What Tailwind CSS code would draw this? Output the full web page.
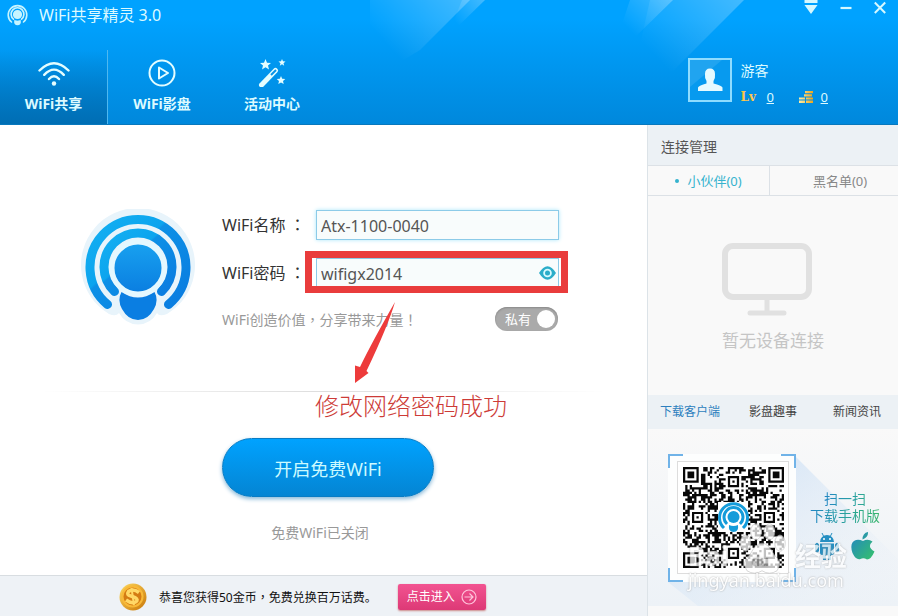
<!DOCTYPE html>
<html lang="zh-CN">
<head>
<meta charset="utf-8">
<meta name="viewport" content="width=device-width, initial-scale=1">
<title>WiFi共享精灵 3.0</title>
<script src="https://cdn.jsdelivr.net/npm/@tailwindcss/browser@4"></script>
</head>
<body class="flex min-h-screen flex-col bg-white font-['Noto_Sans','Noto_Sans_CJK_SC',sans-serif] text-sm text-[#333]">

<svg class="absolute h-0 w-0" aria-hidden="true">
  <defs>
    <linearGradient id="brand" x1="0" y1="0" x2="1" y2="1">
      <stop offset="0" stop-color="#14b0f2"/><stop offset=".4" stop-color="#0ca4ee"/><stop offset=".42" stop-color="#0d90e6"/><stop offset="1" stop-color="#0a7ce0"/>
    </linearGradient>
    <linearGradient id="head" x1="0" y1="0" x2="0" y2="1"><stop offset="0" stop-color="#18a2f0"/><stop offset="1" stop-color="#0a7de0"/></linearGradient>
    <linearGradient id="shine" x1="1" y1="0" x2="0.2" y2=".6"><stop offset="0" stop-color="#fff" stop-opacity=".26"/><stop offset="1" stop-color="#fff" stop-opacity="0"/></linearGradient>
    <linearGradient id="leaf" x1="0" y1="0" x2="1" y2="1"><stop offset="0" stop-color="#2284c6"/><stop offset="1" stop-color="#35c26a"/></linearGradient>
    <linearGradient id="gold" x1="0" y1="0" x2="1" y2="1"><stop offset="0" stop-color="#ffd95e"/><stop offset="1" stop-color="#c87608"/></linearGradient>
    <linearGradient id="coins" x1="0" y1="0" x2="1" y2="0"><stop offset="0" stop-color="#fff0a8"/><stop offset="1" stop-color="#eda51c"/></linearGradient>
  </defs>
</svg>

<header class="relative flex h-[125px] flex-col justify-between overflow-hidden border-b border-[#0878bd] bg-linear-to-b from-[#00a2ff] from-15% to-[#0088dc] text-[#dcfaff]">
  <svg class="pointer-events-none absolute top-0 left-0 h-[124px] w-[898px]" viewBox="0 0 898 124" aria-hidden="true">
    <path d="M370 0H470L420 50L370 80Z" fill="url(#shine)"/><path d="M462 0H485L448 36Z" fill="url(#shine)"/>
    <path d="M630 0H673L632 40L615 45Z" fill="url(#shine)"/><path d="M650 0H744L674 70L630 90Z" fill="url(#shine)"/>
  </svg>
  <div class="relative flex h-[30px] items-center justify-between pr-3 pl-[7px]">
    <div class="flex items-center gap-[11px]">
      <svg class="h-[22px] w-[21px]" viewBox="0 0 21 22" fill="none" stroke="#c6f4ff" stroke-width="1.6" stroke-linecap="round" aria-hidden="true">
        <path d="M4.500 18A9.300 9.300 0 1 1 16.500 18M6.500 15.200A6.400 6.400 0 1 1 14.500 15.200" /><circle cx="10.500" cy="10.500" r="3.800" fill="#c6f4ff"/><path d="M8 17Q10.500 18 13 17Q13.500 20.500 10.500 20.500Q7.500 20.500 8 17Z" fill="#c6f4ff"/>
      </svg>
      <h1 class="text-base leading-6">WiFi共享精灵 3.0</h1>
    </div>
    <div class="flex items-center gap-[22px] pb-4">
      <button type="button" aria-label="菜单"><svg class="h-[15px] w-[14px]" viewBox="0 0 14 15" fill="#d5f8ff"><path d="M.500 0H13.500V3H.500ZM.500 5H13.500L7 14Z"/></svg></button>
      <button type="button" aria-label="最小化"><svg class="h-[15px] w-3" viewBox="0 0 12 15"><path d="M.500 8H11.500" stroke="#d5f8ff" stroke-width="2.200"/></svg></button>
      <button type="button" aria-label="关闭"><svg class="h-[15px] w-3" viewBox="0 0 12 15"><path d="M.800 2.500L11.200 13M11.200 2.500L.800 13" stroke="#d5f8ff" stroke-width="2"/></svg></button>
    </div>
  </div>
  <div class="relative flex items-end justify-between">
    <nav class="flex text-sm leading-5 font-bold">
      <a href="#" class="flex h-[74px] w-[108px] flex-col items-center gap-[7px] border-r border-[#4eb8f0] bg-linear-to-b from-transparent to-[#006eb4] pt-[9px]">
        <svg class="h-7 w-8" viewBox="0 0 32 28" fill="none" stroke="#e4fdff" stroke-width="2.400" stroke-linecap="round" aria-hidden="true"><path d="M1.500 11.500Q16-3 30.500 11.500M6.200 15.800Q16 5.500 25.800 15.800M11 20Q16 14.500 21 20"/><circle cx="16" cy="24.500" r="2.200" fill="#e4fdff" stroke="none"/></svg>
        <span>WiFi共享</span>
      </a>
      <a href="#" class="flex h-[74px] w-[108px] flex-col items-center gap-[7px] pt-[9px]">
        <svg class="h-7 w-7" viewBox="0 0 28 28" fill="none" stroke="#e4fdff" stroke-width="2" aria-hidden="true"><circle cx="14" cy="14" r="12.500"/><path d="M11 8.500L20 14L11 19.500Z" stroke-linejoin="round"/></svg>
        <span>WiFi影盘</span>
      </a>
      <a href="#" class="flex h-[74px] w-[112px] flex-col items-center gap-[7px] pt-[9px]">
        <svg class="h-7 w-7" viewBox="0 0 28 28" fill="#e4fdff" aria-hidden="true"><path d="M7.500 0L9 3.800L13 4L10 6.500L11 10.500L7.500 8.300L4 10.500L5 6.500L2 4L6 3.800ZM24 0L25 2.300L27.500 2.500L25.500 4.200L26.200 6.700L24 5.300L21.800 6.700L22.500 4.200L20.500 2.500L23 2.300ZM23 17L24.200 19.800L27.300 20L25 22L25.700 25L23 23.400L20.300 25L21 22L18.700 20L21.800 19.800Z"/><path d="M3.500 26L17.500 11.500" stroke="#e4fdff" stroke-width="5" stroke-linecap="round"/><path d="M13 16L18 11" stroke="#0894e8" stroke-width="2"/></svg>
        <span>活动中心</span>
      </a>
    </nav>
    <div class="flex items-start gap-[9px] pr-[70px] pb-[17px] leading-5">
      <svg class="h-11 w-11" viewBox="0 0 44 44" role="img" aria-label="头像"><rect x="1" y="1" width="42" height="42" fill="#079aef" stroke="#8edcff" stroke-width="2"/><path d="M2 29L34 2H2Z" fill="#fff" opacity=".1"/><path d="M10 33V29.500Q11 27.500 18.500 25.500V23Q16.500 20.500 17 16Q17 10.500 22 10.500T27 16Q27.500 20.500 25.500 23V25.500Q33.500 27.500 34.500 29.500V33Z" fill="#e6faff"/></svg>
      <div class="flex flex-col gap-1 pt-px">
        <span class="text-sm leading-6">游客</span>
        <div class="flex items-center text-xs leading-5">
          <span class="w-[26px] font-['DejaVu_Serif',serif] text-xs leading-4 font-bold text-[#ffc64b]">Lv</span>
          <a href="#" class="w-[32px] text-[13px] underline">0</a>
          <svg class="mr-2 h-3 w-[14px]" viewBox="0 0 14 12" fill="url(#coins)" aria-hidden="true"><path d="M6 0H14V2.300H6ZM5 3.200H13V5.500H5ZM0 6.400H6V8.500H0ZM7 6.400H14V8.500H7ZM0 9.500H6V12H0ZM7 9.500H14V12H7Z"/></svg>
          <a href="#" class="text-[13px] underline">0</a>
        </div>
      </div>
    </div>
  </div>
</header>

<div class="grid flex-1 grid-cols-[minmax(0,1fr)_251px]">
  <main class="flex flex-col">
    <div class="relative flex-1 pt-[84px]">
      <div class="flex pl-20">
        <svg class="mr-[26px] h-[116px] w-[116px]" viewBox="0 0 116 116" role="img" aria-label="WiFi共享精灵">
          <path d="M29 105A57 57 0 1 1 87 105Q79 108 77 104Q71 115 58 115.500Q45 115 39 104Q36 108 29 105Z" fill="#e8f4fb"/>
          <g fill="none" stroke-linecap="round">
          <path d="M27.500 95.500A48 48 0 1 1 88.500 95.500" stroke="url(#brand)" stroke-width="9"/>
          <path d="M34.500 82.500A34 34 0 1 1 81.500 82.500" stroke="url(#brand)" stroke-width="9"/></g>
          <path d="M41.500 83Q58 94 74.500 83Q79 91 74 100Q68 111 58 111T42 100Q37 91 41.500 83Z" fill="#0a7ee2"/>
          <circle cx="58" cy="59" r="26" fill="url(#head)" stroke="#e4f8ff" stroke-width="5"/>
        </svg>
        <form class="flex flex-col text-base">
          <div class="mt-px flex h-[30px] items-center">
            <label for="ssid" class="w-[94px] whitespace-nowrap">WiFi名称 <span lang="zh-TW" class="font-['Noto_Sans_CJK_TC',sans-serif] leading-none">：</span></label>
            <input id="ssid" type="text" value="Atx-1100-0040" class="h-[30px] w-[243px] border border-[#8ccbe8] bg-[#f8fcfc] px-1 pt-[2px] text-base text-[#555] shadow-[0_0_4px_#a9e6fa] outline-none">
          </div>
          <div class="relative mt-[18px] flex h-[30px] items-center">
            <label for="pwd" class="w-[94px] whitespace-nowrap">WiFi密码 <span lang="zh-TW" class="font-['Noto_Sans_CJK_TC',sans-serif] leading-none">：</span></label>
            <input id="pwd" type="text" value="wifigx2014" class="h-[30px] w-[243px] border border-[#8ccbe8] bg-[#f8fcfc] pt-[2px] pr-8 pl-1 text-base text-[#555] outline-none">
            <button type="button" aria-label="显示密码" class="absolute right-[3px]"><svg class="h-[14px] w-[17px]" viewBox="0 0 17 14"><path d="M0 7Q8.500-6.500 17 7Q8.500 20.500 0 7Z" fill="#2badc9"/><circle cx="8.500" cy="7" r="4.300" fill="#d9fbff"/><circle cx="8.500" cy="7" r="2.500" fill="#2badc9"/></svg></button>
            <div class="pointer-events-none absolute -top-[7px] -right-[9px] h-[42px] w-[263px] border-[7px] border-[#e93c3c]"></div>
            <svg class="pointer-events-none absolute top-[42px] left-[132px] z-10 h-[84px] w-11" viewBox="0 0 44 84" fill="#ed3b3b" aria-hidden="true"><path d="M41 2Q34 26 12.500 71L14.500 73L1 83V65.500L6 67Q18 42 41 2Z"/></svg>
          </div>
          <div class="mt-[19px] flex h-6 items-center justify-between text-sm text-[#999]">
            <p>WiFi创造价值<span lang="zh-TW" class="font-['Noto_Sans_CJK_TC',sans-serif]">，</span>分享带来力量<span lang="zh-TW" class="font-['Noto_Sans_CJK_TC',sans-serif]">！</span></p>
            <label class="relative mr-px flex h-6 w-[63px] cursor-pointer items-center rounded-full bg-[#aaa] pl-[10px] text-[13px] text-white shadow-[inset_0_1px_2px_#888]">
              <input type="checkbox" class="peer sr-only">私有<span class="absolute right-[3px] h-[18px] w-[18px] rounded-full bg-white"></span>
            </label>
          </div>
        </form>
      </div>
      <div class="mx-10 mt-[60px] h-px bg-linear-to-r from-transparent via-[#ddd] to-transparent"></div>
      <p class="pl-[315px] text-2xl leading-7 font-light text-[#cd3b37]">修改网络密码成功</p>
      <div class="mt-[18px] ml-[222px] flex w-[212px] flex-col items-center gap-6">
        <button type="button" class="h-[59px] w-full rounded-full border border-[#087cc4] bg-linear-to-b from-[#00a2ff] to-[#0485d3] pt-[3px] text-lg text-[#ccfaff] shadow-[0_2px_4px_#87b8d8]">开启免费WiFi</button>
        <p class="pr-4 leading-6 text-[#999]">免费WiFi已关闭</p>
      </div>
    </div>
    <footer class="flex h-[41px] items-center border-t border-[#d8dde1] bg-[#eef2f6] pt-[2px] pl-[119px] text-xs text-[#111]">
      <svg class="mr-3 h-7 w-7" viewBox="0 0 28 28" aria-hidden="true"><circle cx="14" cy="14" r="13.500" fill="url(#gold)"/><circle cx="13.500" cy="13.500" r="10" fill="#d47b13" stroke="#f8b938" stroke-width="2"/><path d="M20 9.500Q14 5 9.500 8.500Q7 12 12 13L16 14.500Q20 17 16.500 19Q12.500 21 7 17" fill="none" stroke="#ffd867" stroke-width="3.500"/><path d="M12.500 5L15 22" stroke="#ffd867" stroke-width="2"/></svg>
      <p>恭喜您获得50金币<span lang="zh-TW" class="font-['Noto_Sans_CJK_TC',sans-serif]">，</span>免费兑换百万话费。</p>
      <a href="#" class="ml-[21px] flex h-[26px] w-[88px] items-center justify-center gap-[6px] rounded-[2px] bg-linear-to-b from-[#f25391] to-[#dd3976] text-white shadow-[0_1px_2px_#c88]">点击进入<svg class="h-4 w-4" viewBox="0 0 16 16" fill="none" stroke="#ffc4db" stroke-width="1.200" aria-hidden="true"><circle cx="8" cy="8" r="7"/><path d="M3.500 8H12M8.500 4.500L12 8L8.500 11.500"/></svg></a>
    </footer>
  </main>

  <aside class="flex flex-col border-l border-[#dce3e8] bg-[#f9f9f9]">
    <h2 class="flex h-10 items-center bg-[#ecf1f5] pt-1 pl-[13px] text-[#555]">连接管理</h2>
    <div class="grid h-[31px] grid-cols-[122px_1fr] border-y border-[#dce1e6] text-[13px]">
      <button type="button" class="flex items-center justify-center gap-2 border-r border-[#dce1e6] pt-px text-[#35b3ce]"><span class="size-1 rounded-full bg-[#35b3ce]"></span>小伙伴(0)</button>
      <button type="button" class="pt-px pl-3 text-[#888]">黑名单(0)</button>
    </div>
    <div class="flex h-[199px] flex-col items-center pt-[47px]">
      <svg class="mr-3 h-[74px] w-[90px]" viewBox="0 0 90 74" fill="none" stroke="#e1e1e1" aria-hidden="true"><rect x="3" y="3" width="84" height="51" rx="8" stroke-width="6"/><path d="M45 54V69" stroke-width="5"/><path d="M28 70H62" stroke-width="5" stroke-linecap="round"/></svg>
      <p class="mt-3 text-[17px] leading-6 text-[#c5c5c5]">暂无设备连接</p>
    </div>
    <nav class="flex h-[34px] items-center bg-[#ecf1f5] pl-3 text-xs text-[#444]">
      <a href="#" class="mr-[29px] text-[#2c7fbe]">下载客户端</a><a href="#" class="mr-9">影盘趣事</a><a href="#">新闻资讯</a>
    </nav>
    <section class="relative flex h-[177px] gap-[14px] bg-linear-to-b from-[#f9f9f9] to-[#edf2f7] pt-[25px] pl-5">
      <svg class="absolute top-0 left-0 h-[177px] w-[250px]" viewBox="0 0 250 177" aria-hidden="true"><defs><linearGradient id="shade" x1="0" y1="0" x2="1" y2="1"><stop offset="0" stop-color="#c5dcf5"/><stop offset="1" stop-color="#edf2f7" stop-opacity="0"/></linearGradient></defs><path d="M148 28L250 130V177H50L20 153Z" fill="url(#shade)"/></svg>
      <svg id="qr" class="relative h-32 w-32" viewBox="0 0 128 128" role="img" aria-label="下载二维码">
        <rect width="128" height="128" fill="#fdfefe"/><rect x="9.500" y="7.500" width="111" height="112" fill="#fff" stroke="#ddd"/>
        <path d="M1 14V1H15M113 1H127V14M127 114V127H113M15 127H1V114" fill="none" stroke="#70b3e8" stroke-width="2"/>
        <path id="modules" transform="translate(15 13) scale(2.244)" fill="#080808"/>
        <g id="badge"><rect x="50" y="48" width="30" height="30" fill="#fff"/><g fill="none" stroke="#159cda" stroke-width="3"><path d="M56 74A14 14 0 1 1 75 74M59 70A9.500 9.500 0 1 1 72 70"/></g><circle cx="65.500" cy="63" r="6" fill="#159cda"/><path d="M61 71Q65.500 73 70 71Q71 78 65.500 78T61 71Z" fill="#159cda"/></g>
      </svg>
      <div class="relative flex flex-col items-center pt-[36px] text-sm leading-[17px] text-[#2486c4]">
        <p class="bg-linear-to-r from-[#2486c4] to-[#30aa91] bg-clip-text text-transparent">扫一扫</p>
        <p class="bg-linear-to-r from-[#2486c4] to-[#39b56b] bg-clip-text text-transparent">下载手机版</p>
        <div class="mt-2 flex gap-3">
          <svg class="h-7 w-6" viewBox="0 0 24 28" fill="#258fc2" aria-hidden="true"><path d="M5 10A7 7 0 0 1 19 10ZM5 11.500H19V21Q19 23 17 23H16V28H13V23H11V28H8V23H7Q5 23 5 21ZM0 12.500Q2 9 4 12.500V19Q2 22 0 19ZM20 12.500Q22 9 24 12.500V19Q22 22 20 19Z"/><path d="M7 1L9 5M17 1L15 5" stroke="#258fc2"/><circle cx="9" cy="7" r="1" fill="#fff"/><circle cx="15" cy="7" r="1" fill="#fff"/></svg>
          <svg class="h-7 w-6" viewBox="0 0 24 28" fill="url(#leaf)" aria-hidden="true"><path d="M12 9Q17 6.500 21.500 9.500Q15.500 15 23.500 19.500Q20 27.500 16 27.500Q12.500 25.500 9.500 27Q5 28.500 1.500 21Q-2 10.500 5 8Q8 7 12 9ZM11.500 7.500Q11.500 1 17 0Q17.500 5.500 11.500 7.500Z"/></svg>
        </div>
      </div>
      <div class="pointer-events-none absolute top-[109px] left-[40px] w-[159px] text-white" aria-hidden="true">
        <div class="flex items-center justify-between text-[26px] leading-9 font-bold opacity-75 [text-shadow:0_0_2px_#999]"><span>Bai</span>
          <svg class="-mt-4 h-13 w-12" viewBox="0 0 32 32" preserveAspectRatio="none" fill="#fff" stroke="#bbb" stroke-width=".5"><ellipse cx="5" cy="13" rx="3.500" ry="5"/><ellipse cx="12" cy="6" rx="3.500" ry="5"/><ellipse cx="21" cy="6" rx="3.500" ry="5"/><ellipse cx="28" cy="13" rx="3.500" ry="5"/><path d="M16 13Q20 13 24 20Q30 25 26 30Q21 33 16 30Q11 33 6 30Q2 25 8 20Q12 13 16 13Z"/><text x="9" y="27" font-size="9" fill="#aaa" stroke="none">du</text></svg>
          <span>经验</span></div>
        <div class="-mt-1 text-[18px] leading-5 opacity-90 [text-shadow:0_0_2px_#999]">jingyan.baidu.com</div>
      </div>
    </section>
  </aside>
</div>

<script>
  // Fills the code area with modules and the three corner finders plus small alignment marks.
  const size = 45;
  let seed = 2014;
  const next = () => (seed = (seed * 1103515245 + 12345) % 2147483648) / 2147483648;
  const grid = Array.from({ length: size }, () => Array.from({ length: size }, () => next() > 0.47));
  const mark = (cx, cy, radius) => {
    for (let y = -radius - 1; y <= radius + 1; y++) for (let x = -radius - 1; x <= radius + 1; x++) {
      const r = Math.max(Math.abs(x), Math.abs(y));
      if (grid[cy + y] && cx + x >= 0 && cx + x < size) {
        grid[cy + y][cx + x] = radius === 3 ? r === 3 || r < 2 : r === 2 || r === 0;
      }
    }
  };
  [[3, 3], [41, 3], [3, 41]].forEach(([x, y]) => mark(x, y, 3));
  [[22, 6], [6, 22], [38, 22], [22, 38], [38, 38]].forEach(([x, y]) => mark(x, y, 2));
  let d = "";
  grid.forEach((row, y) => row.forEach((on, x) => { if (on) d += `M${x} ${y}h1v1h-1z`; }));
  document.getElementById("modules").setAttribute("d", d);
</script>
</body>
</html>
